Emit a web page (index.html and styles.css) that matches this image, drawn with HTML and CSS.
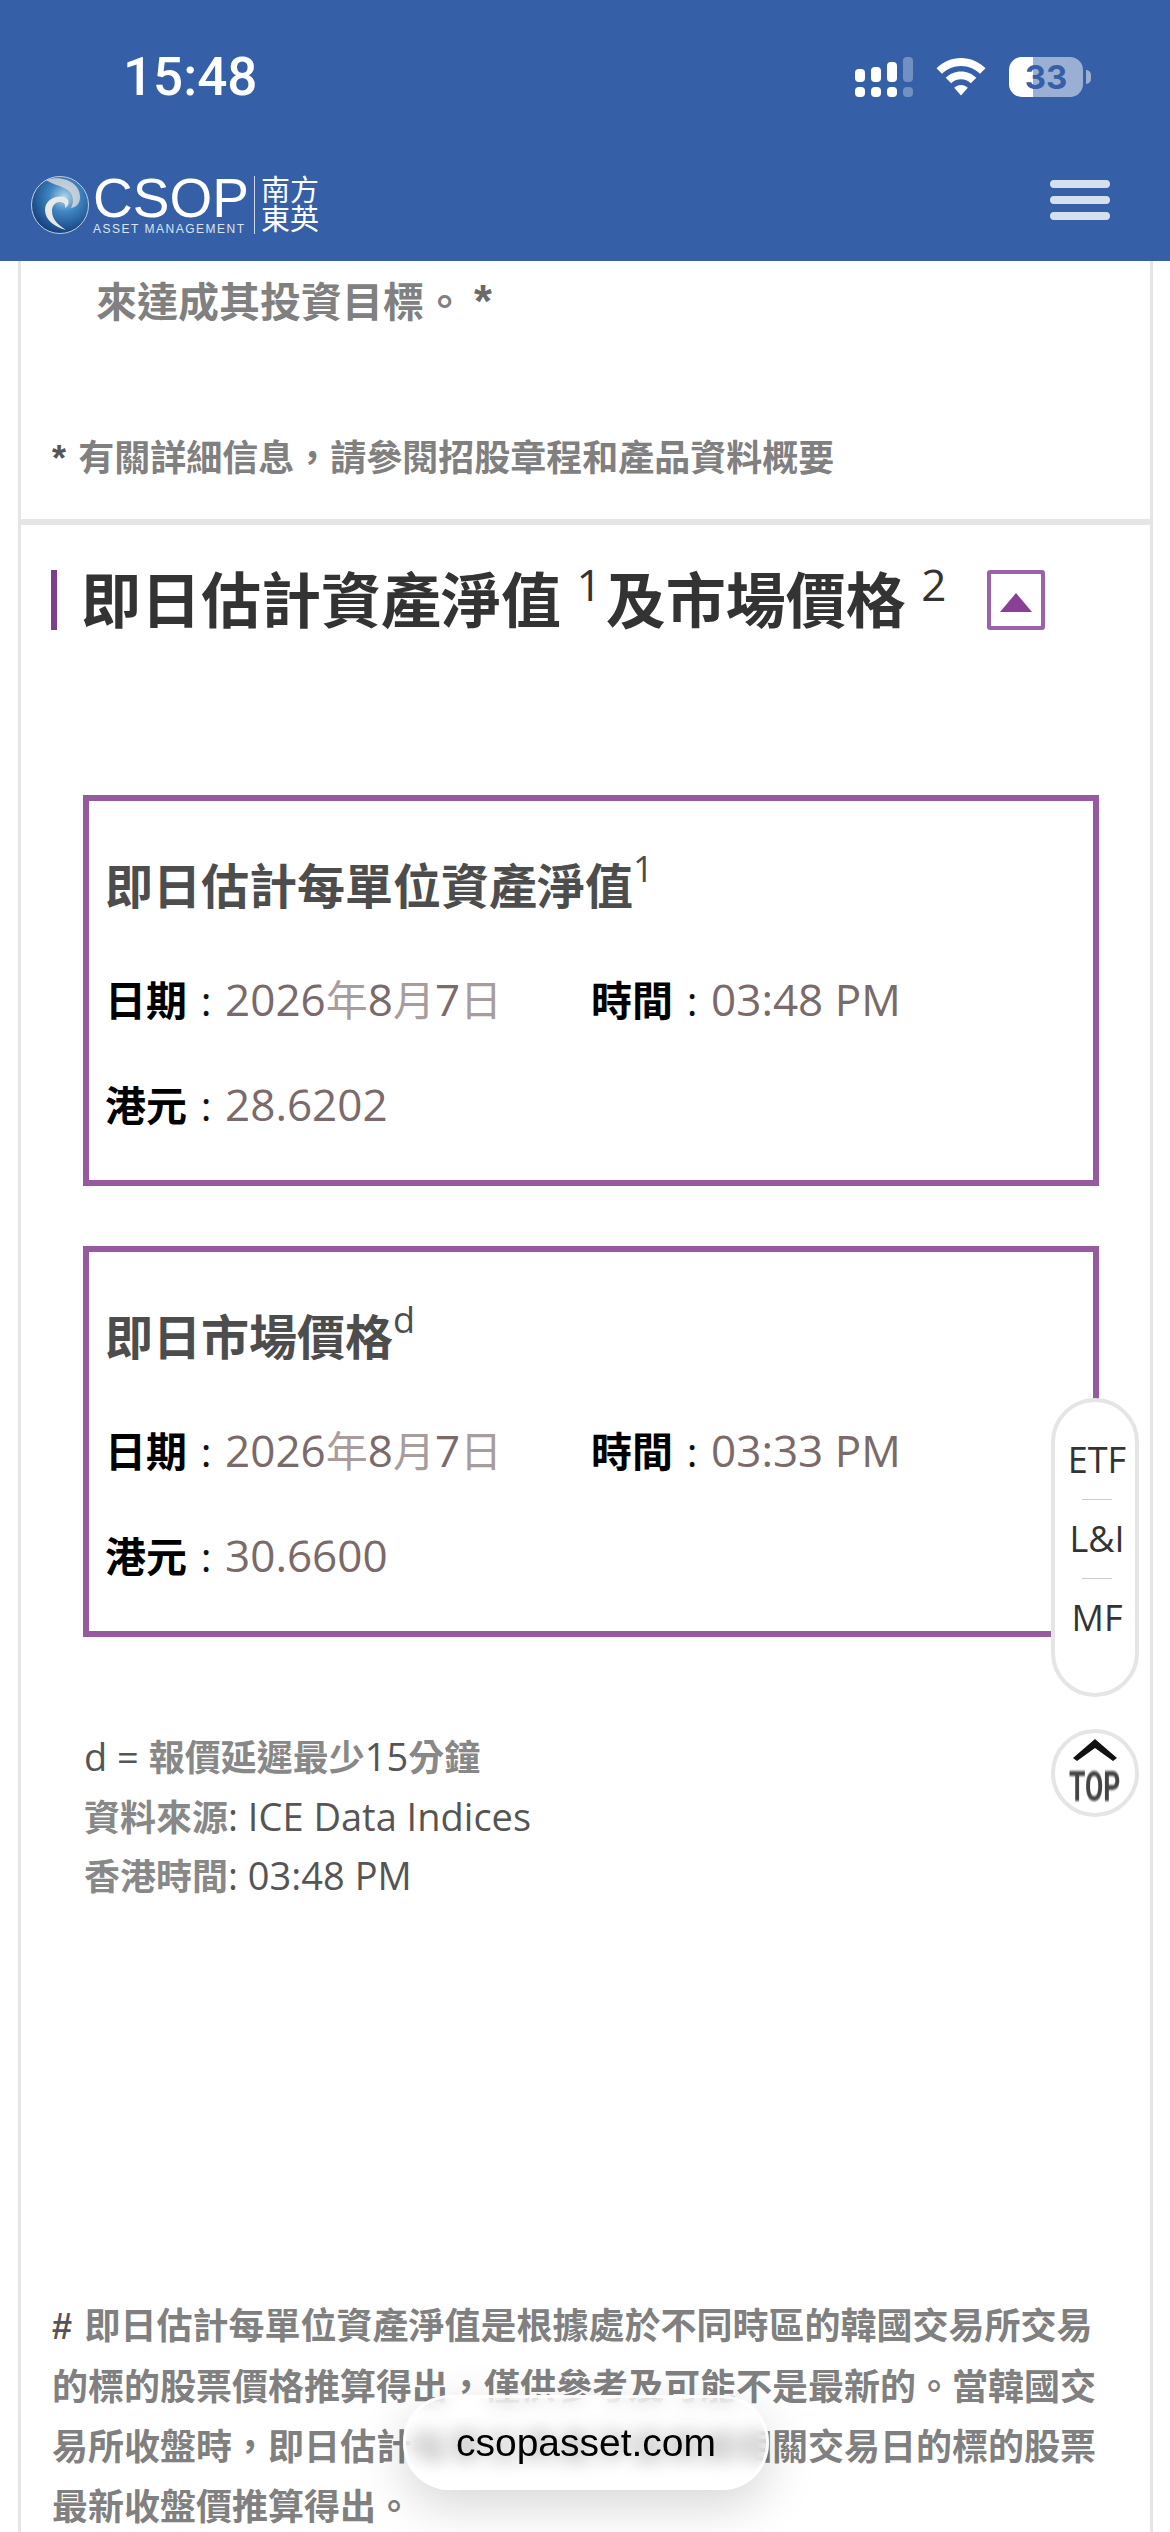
FILE: index.html
```html
<!DOCTYPE html>
<html lang="zh-Hant">
<head>
  <meta charset="UTF-8" />
  <title>CSOP</title>
  <link rel="stylesheet" href="styles.css">
</head>
<body>

  <header class="topbar">
    <div class="status">
      <span class="clock">15:48</span>
      <div class="status-icons">
        <svg class="signal" width="58" height="40" viewBox="0 0 58 40">
          <g fill="#fff">
            <rect x="0" y="12" width="10" height="13" rx="4"/>
            <rect x="16" y="10" width="10" height="15" rx="4"/>
            <rect x="32" y="5" width="10" height="20" rx="4"/>
            <rect x="0" y="30" width="10" height="10" rx="4"/>
            <rect x="16" y="30" width="10" height="10" rx="4"/>
            <rect x="32" y="30" width="10" height="10" rx="4"/>
          </g>
          <g fill="#fff" fill-opacity=".3">
            <rect x="48" y="0" width="10" height="25" rx="4"/>
            <rect x="48" y="30" width="10" height="10" rx="4"/>
          </g>
        </svg>
        <svg class="wifi" width="50" height="38" viewBox="0 0 50 38">
          <path d="M25 0C15.500 0 7 3.800 .5 10.300L6 15.800C11 10.800 17.700 8 25 8s14 2.800 19 7.800l5.500-5.500C43 3.800 34.500 0 25 0z" fill="#fff"/>
          <path d="M25 13.500c-6 0-11.400 2.400-15.300 6.300l5.500 5.500c2.500-2.500 6-4 9.800-4s7.300 1.500 9.800 4l5.500-5.500C36.400 15.900 31 13.500 25 13.500z" fill="#fff"/>
          <path d="M25 27c-2.700 0-5.100 1.100-6.800 2.800L25 37.500l6.800-7.700C30.100 28.100 27.700 27 25 27z" fill="#fff"/>
        </svg>
        <div class="battery"><span>33</span></div>
        <i class="battery-nub"></i>
      </div>
    </div>
    <nav class="nav">
      <div class="logo">
        <svg class="swirl" width="60" height="60" viewBox="0 0 60 60">
          <defs>
            <radialGradient id="ball" cx="58%" cy="36%" r="66%">
              <stop offset="0" stop-color="#b4d6ec"/>
              <stop offset=".4" stop-color="#3f86c2"/>
              <stop offset="1" stop-color="#123f7c"/>
            </radialGradient>
          </defs>
          <circle cx="30" cy="30" r="28.500" fill="url(#ball)" stroke="#c3ccd8" stroke-width="1"/>
          <path d="M16 5C30 0 50 6 50 22c0 6-3 10-9 11 4-7 2-17-7-20C28 10 22 9 16 5z" fill="#d4d7da" fill-opacity=".85"/>
          <path d="M34 22C24 20 15 26 15 35c0 10 10 17 21 20-8-5-14-11-14-19 0-6 4-9 8-9s6 3 5 6c5-3 5-9-1-11z" fill="#e8e8e6"/>
        </svg>
        <div class="brand">
          <span class="brand-name">CSOP</span>
          <span class="brand-sub">ASSET MANAGEMENT</span>
        </div>
        <i class="brand-rule"></i>
        <div class="brand-cn"><span>南方</span><span>東英</span></div>
      </div>
      <div class="menu"><i></i><i></i><i></i></div>
    </nav>
  </header>

  <main class="page">
    <section class="intro">
      <p class="intro-text">來達成其投資目標。<b>*</b></p>
      <p class="small-note"><b>*</b> 有關詳細信息，請參閱招股章程和產品資料概要</p>
    </section>

    <section class="nav-section">
      <h2 class="section-title">
        <span class="section-text">即日估計資產淨值 <sup>1</sup>及市場價格 <sup>2</sup></span>
        <span class="toggle"><i></i></span>
      </h2>

      <div class="card">
        <h3>即日估計每單位資產淨值<sup>1</sup></h3>
        <div class="row">
          <span class="cell"><b>日期</b> : <em>2026<u>年</u>8<u>月</u>7<u>日</u></em></span>
          <span class="cell"><b>時間</b> : <em>03:48 PM</em></span>
        </div>
        <div class="row last">
          <span class="cell"><b>港元</b> : <em>28.6202</em></span>
        </div>
      </div>

      <div class="card">
        <h3>即日市場價格<sup>d</sup></h3>
        <div class="row">
          <span class="cell"><b>日期</b> : <em>2026<u>年</u>8<u>月</u>7<u>日</u></em></span>
          <span class="cell"><b>時間</b> : <em>03:33 PM</em></span>
        </div>
        <div class="row last">
          <span class="cell"><b>港元</b> : <em>30.6600</em></span>
        </div>
      </div>

      <ul class="sources">
        <li>d = <u>報價延遲最少</u>15<u>分鐘</u></li>
        <li><u>資料來源</u>: ICE Data Indices</li>
        <li><u>香港時間</u>: 03:48 PM</li>
      </ul>

      <p class="footnote"><b>#</b> 即日估計每單位資產淨值是根據處於不同時區的韓國交易所交易的標的股票價格推算得出，僅供參考及可能不是最新的。當韓國交易所收盤時，即日估計每單位資產淨值根據相關交易日的標的股票最新收盤價推算得出。</p>
    </section>
  </main>

  <!-- floating bits -->
  <div class="side-pill">
    <a>ETF</a>
    <hr>
    <a>L&amp;I</a>
    <hr>
    <a>MF</a>
  </div>
  <div class="to-top">
    <svg width="44" height="22" viewBox="0 0 44 22"><path d="M22 0 44 19l-4 3L22 9 4 22l-4-3z" fill="#111"/></svg>
    <span>TOP</span>
  </div>
  <div class="url-pill">csopasset.com</div>

</body>
</html>
```

FILE: styles.css
```css
* {
  box-sizing: border-box;
}
html, body {
  margin: 0;
  padding: 0;
  width: 1170px;
  height: 2532px;
  overflow: hidden;
  background: #fff;
  font-family: "Open Sans", "Noto Sans CJK SC", sans-serif;
}
body {
  position: relative;
}
p, h2, h3, ul {
  margin: 0;
  padding: 0;
}
i, em, u {
  font-style: normal;
  text-decoration: none;
}

/* top bar */
.topbar {
  height: 261px;
  background: #3560a7;
  color: #fff;
}
.status {
  height: 150px;
  padding: 57px 0 0 123px;
  display: flex;
  justify-content: space-between;
  align-items: flex-start;
}
.clock {
  font-family: Roboto, sans-serif;
  font-weight: 500;
  font-size: 53px;
  line-height: 40px;
}
.status-icons {
  display: flex;
  align-items: flex-start;
  padding-right: 79px;
}
.wifi {
  margin: 1px 0 0 23px;
}
.battery {
  width: 74px;
  height: 40px;
  margin-left: 23px;
  border-radius: 13px;
  background: linear-gradient(to right, #fff 24px, rgba(255, 255, 255, .5) 24px);
  display: flex;
  align-items: center;
  justify-content: center;
}
.battery span {
  font-family: Inter, sans-serif;
  font-weight: 700;
  font-size: 33px;
  color: #3560a7;
}
.battery-nub {
  width: 5px;
  height: 14px;
  margin: 13px 0 0 3px;
  border-radius: 0 7px 7px 0;
  background: rgba(255, 255, 255, .5);
}
.nav {
  height: 111px;
  padding: 25px 60px 0 30px;
  display: flex;
  justify-content: space-between;
  align-items: flex-start;
}
.logo {
  display: flex;
  align-items: flex-start;
}
.brand {
  display: flex;
  flex-direction: column;
  margin-left: 3px;
}
.brand-name {
  font-family: "Liberation Sans", sans-serif;
  font-size: 55px;
  line-height: 46px;
}
.brand-sub {
  margin-top: 1px;
  font-family: "Liberation Sans", sans-serif;
  font-size: 12px;
  line-height: 14px;
  letter-spacing: 1.500px;
  white-space: nowrap;
  color: #dbe4f0;
}
.brand-rule {
  width: 1px;
  height: 58px;
  margin: 1px 6px 0 5px;
  background: #cdd8ea;
}
.brand-cn {
  display: flex;
  flex-direction: column;
  font-size: 29px;
  line-height: 29px;
  font-weight: 400;
}
.menu {
  display: flex;
  flex-direction: column;
  gap: 8px;
  padding-top: 5px;
}
.menu i {
  display: block;
  width: 60px;
  height: 8px;
  border-radius: 4px;
  background: #d6dfee;
}

/* page */
.page {
  margin: 0 17px 0 18px;
  border-left: 3px solid #e5e5e5;
  border-right: 3px solid #e5e5e5;
}
.intro {
  padding-bottom: 31px;
  border-bottom: 6px solid #e5e5e5;
}
.intro-text {
  padding-left: 75px;
  height: 80px;
  font-size: 41px;
  line-height: 80px;
  font-weight: 700;
  color: #808080;
}
.intro-text b {
  margin-left: 9px;
  font-family: "Liberation Sans", sans-serif;
  font-size: 46px;
  font-weight: 700;
  color: #6a6a6a;
}
.small-note {
  margin-top: 87px;
  padding-left: 31px;
  height: 60px;
  font-size: 36px;
  line-height: 60px;
  font-weight: 700;
  color: #808080;
}
.small-note b, .footnote b {
  margin-right: 3px;
  font-family: "Liberation Sans", sans-serif;
  font-weight: 700;
  color: #555;
}

.section-title {
  margin: 45px 0 165px 30px;
  height: 60px;
  display: flex;
  align-items: center;
}
.section-text {
  border-left: 6px solid #7b3f8c;
  padding-left: 24px;
  font-size: 60px;
  line-height: 60px;
  font-weight: 700;
  color: #333;
  white-space: nowrap;
}
.section-text sup {
  margin-right: 4px;
  font-size: 44px;
  font-weight: 400;
  line-height: 0;
  vertical-align: 22px;
}
.toggle {
  width: 58px;
  height: 60px;
  margin-left: 36px;
  border: 4px solid #9a62a8;
  border-radius: 3px;
  display: flex;
  align-items: center;
  justify-content: center;
  filter: blur(.5px);
}
.toggle i {
  width: 0;
  height: 0;
  margin-top: 4px;
  border-left: 16px solid transparent;
  border-right: 16px solid transparent;
  border-bottom: 19px solid #8a3f96;
}

.card {
  width: 1016px;
  margin: 0 0 60px 62px;
  padding: 55px 16px 46px;
  border: 6px solid #965a9e;
}
.card h3 {
  font-size: 48px;
  line-height: 60px;
  font-weight: 700;
  color: #4d4d4d;
}
.card h3 sup {
  font-size: 36px;
  font-weight: 400;
  line-height: 0;
  vertical-align: 22px;
}
.row {
  display: flex;
  height: 60px;
  margin-top: 53px;
  font-size: 41px;
  line-height: 60px;
  color: #111;
}
.row.last {
  margin-top: 45px;
}
.cell {
  width: 487px;
}
.cell b {
  margin-right: 3px;
  color: #000;
}
.cell em {
  margin-left: 3px;
  font-size: 44px;
  color: #7a6a6a;
}
.cell u {
  font-size: 42px;
  color: #a89c9c;
}

.sources {
  list-style: none;
  margin: 90px 0 390px 63px;
  font-size: 38px;
  line-height: 59.500px;
  color: #555;
}
.sources li {
  height: 59.500px;
}
.sources u {
  font-size: 36px;
  font-weight: 700;
  color: #888;
}

.footnote {
  width: 1060px;
  margin-left: 31px;
  font-size: 36px;
  line-height: 60px;
  font-weight: 700;
  color: #808080;
}

/* things floating over the page */
.side-pill {
  position: absolute;
  left: 1051px;
  top: 1398px;
  width: 88px;
  height: 299px;
  padding: 33px 0 0 4px;
  border: 4px solid #e5e5e5;
  border-radius: 44px;
  background: #fff;
  display: flex;
  flex-direction: column;
  align-items: center;
}
.side-pill a {
  font-size: 36px;
  line-height: 50px;
  color: #333;
}
.side-pill hr {
  width: 30px;
  height: 1px;
  margin: 14px 0;
  border: none;
  background: #ccc;
}
.to-top {
  position: absolute;
  left: 1051px;
  top: 1729px;
  width: 88px;
  height: 88px;
  padding-top: 6px;
  border: 4px solid #e5e5e5;
  border-radius: 50%;
  background: #fff;
  display: flex;
  flex-direction: column;
  align-items: center;
}
.to-top svg {
  filter: blur(.5px);
}
.to-top span {
  margin-top: 9px;
  font-family: Roboto, sans-serif;
  font-weight: 700;
  font-size: 42px;
  line-height: 34px;
  color: #444;
  transform: scaleX(.63);
  filter: blur(.8px);
}
.url-pill {
  position: absolute;
  left: 403px;
  top: 2395px;
  width: 366px;
  height: 95px;
  border: 3px solid rgba(255, 255, 255, .9);
  border-radius: 47px;
  background: rgba(255, 255, 255, .55);
  backdrop-filter: blur(8px);
  box-shadow: 0 16px 50px rgba(0, 0, 0, .16);
  display: flex;
  align-items: center;
  justify-content: center;
  font-family: "Liberation Sans", sans-serif;
  font-size: 39px;
  color: #000;
}
```
